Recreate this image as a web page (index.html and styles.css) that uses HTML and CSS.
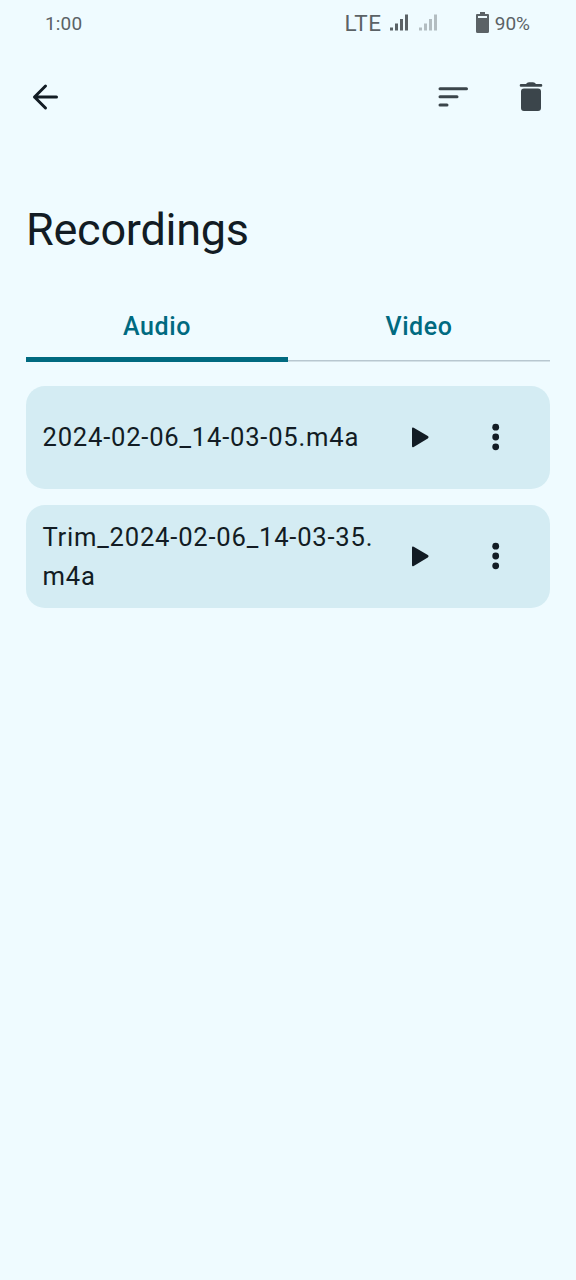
FILE: index.html
```html
<!DOCTYPE html>
<html lang="en">
<head>
<meta charset="utf-8">
<title>Recordings</title>
<link rel="stylesheet" href="styles.css">
</head>
<body>
<div class="status">
  <span class="time">1:00</span>
  <span class="lte">LTE</span>
  <svg class="signal" width="19" height="18" viewBox="0 0 19 18"><path d="M0 13.500h3v3H0zM5 9.500h3v7H5zM10 5h3v11.500h-3zM15 .5h3v16h-3z"/></svg>
  <svg class="signal dim" width="19" height="18" viewBox="0 0 19 18"><path d="M0 13.500h3v3H0zM5 9.500h3v7H5zM10 5h3v11.500h-3zM15 .5h3v16h-3z"/></svg>
  <svg class="battery" width="13" height="22" viewBox="0 0 13 22"><path fill-rule="evenodd" d="M4 0h5v2h3q1 0 1 1v16.500q0 1.500-1.500 1.500h-10Q0 21 0 19.500V3q0-1 1-1h3zM2 4v2h9V4z"/></svg>
  <span class="percent">90%</span>
</div>
<header class="toolbar">
  <svg class="back" width="38" height="38" viewBox="0 0 38 38"><path d="M30.500 19H8.500M19.500 8 8.500 19l11 11"/></svg>
  <svg class="sort" width="30" height="22" viewBox="0 0 30 22"><path d="M2 2.700h26.500M2 10.700h17M2 18.900h7"/></svg>
  <svg class="trash" width="24" height="30" viewBox="0 0 24 30"><path d="M2 2h5q1-1.700 3-1.700h4Q16 .3 17 2h5q1.300 0 1.300 1.400T22 4.800H2Q.7 4.800.7 3.400T2 2zM5 6.500h14q3 0 3 3V26q0 3-3 3H5q-3 0-3-3V9.500q0-3 3-3z"/></svg>
</header>
<h1 class="title">Recordings</h1>
<nav class="tabs"><span class="tab active">Audio</span><span class="tab">Video</span></nav>
<main class="list">
  <article class="card"><span class="name">2024-02-06_14-03-05.m4a</span>
    <svg class="play" width="17" height="21" viewBox="0 0 17 21"><path d="M0 1.800Q0-.2 1.700.8L15.800 9q1.500 1.200 0 2.400L1.700 19.900Q0 20.800 0 19z"/></svg>
    <svg class="more" width="8" height="28" viewBox="0 0 8 28"><circle cx="3.700" cy="4.200" r="3.400"/><circle cx="3.700" cy="14" r="3.400"/><circle cx="3.700" cy="23.800" r="3.400"/></svg></article>
  <article class="card"><span class="name">Trim_2024-02-06_14-03-35.<br>m4a</span>
    <svg class="play" width="17" height="21" viewBox="0 0 17 21"><path d="M0 1.800Q0-.2 1.700.8L15.800 9q1.500 1.200 0 2.400L1.700 19.900Q0 20.800 0 19z"/></svg>
    <svg class="more" width="8" height="28" viewBox="0 0 8 28"><circle cx="3.700" cy="4.200" r="3.400"/><circle cx="3.700" cy="14" r="3.400"/><circle cx="3.700" cy="23.800" r="3.400"/></svg></article>
</main>
</body>
</html>
```
FILE: styles.css
```css
* { box-sizing: border-box; }
body { margin: 0; min-height: 1280px; background: #effbff; color: #121c24; font-family: Roboto, sans-serif; }
svg { display: block; flex: none; fill: currentColor; }
.status { height: 46px; display: flex; align-items: center; padding: 0 46px 0 45px; color: #5b6266; font-size: 19px; }
.time { margin-right: auto; letter-spacing: .15px; }
.lte { font-size: 22.500px; letter-spacing: .6px; margin-right: 8px; margin-top: -1px; }
.dim { margin-left: 10px; opacity: .4; }
.battery { margin: 0 6px 0 38px; }
.toolbar { height: 102px; display: flex; align-items: center; padding: 0 33px 0 26px; }
.back, .sort { fill: none; stroke: currentColor; stroke-width: 3; stroke-linecap: round; stroke-linejoin: round; }
.sort { margin-left: auto; margin-right: 51px; color: #3b454b; }
.trash { color: #3b454b; }
.title { margin: 0; padding: 56px 26px 0; height: 144px; font-size: 45px; letter-spacing: -.25px; line-height: 52px; font-weight: 400; }
.tabs { display: flex; margin: 0 26px; height: 70px; background: linear-gradient(#b8c7d0, #b8c7d0) 0 68px / 100% 1.500px no-repeat; }
.tab { flex: 1; text-align: center; color: #006a80; font-size: 25px; letter-spacing: .6px; font-weight: 500; line-height: 69px; }
.active { border-bottom: 5px solid #006a80; height: 70px; }
.list { display: flex; flex-direction: column; gap: 16px; padding: 24px 26px; }
.card { height: 103px; display: flex; align-items: center; border-radius: 19px; background: #d4ecf3; padding: 0 50px 0 16.500px; }
.name { flex: 1; font-size: 25.600px; line-height: 39px; letter-spacing: .78px; white-space: nowrap; }
.play, .more { margin-top: -1px; }
.more { margin-left: 63px; }
```
